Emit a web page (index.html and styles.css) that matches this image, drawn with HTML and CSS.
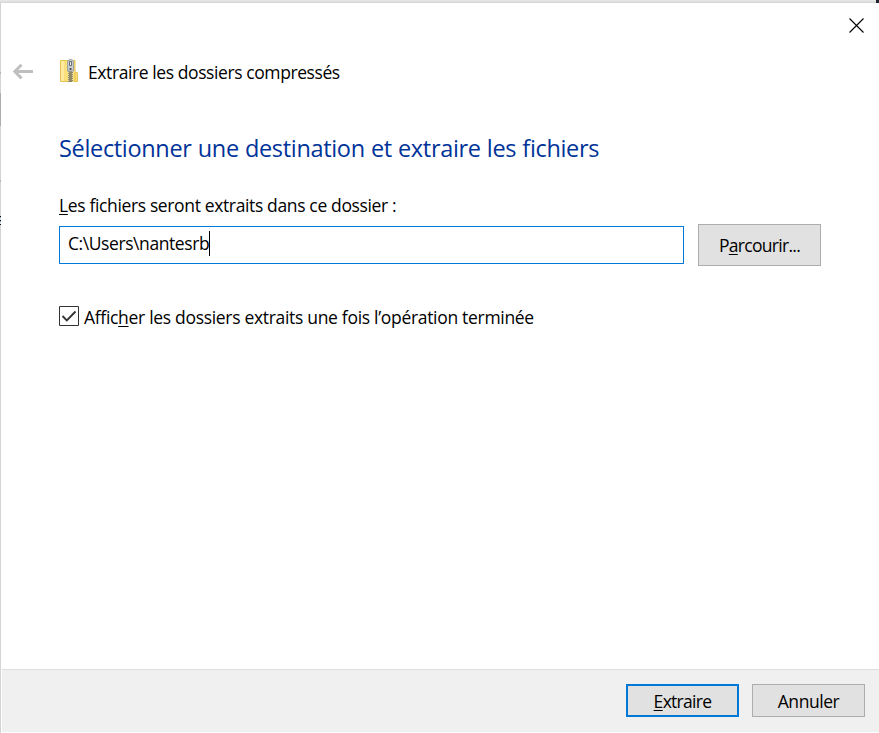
FILE: index.html
```html
<!DOCTYPE html>
<html lang="fr">
<head>
<meta charset="utf-8">
<title>Extraire les dossiers compressés</title>
<link rel="stylesheet" href="styles.css">
</head>
<body>
<div class="desktop">
<span class="edge-mark edge-tick"></span>
<span class="edge-mark edge-thumb"></span>
<span class="edge-mark edge-tick-low"></span>
<span class="edge-mark edge-glyph"></span>
<span class="edge-mark edge-corner"></span>
<main class="dialog">
  <div class="titlebar">
    <svg class="close" width="15" height="15" viewBox="0 0 15 15"><path d="M.5 .5l14 14M14.5 .5l-14 14" stroke="#000" stroke-width="1.1"/></svg>
  </div>
  <header class="header">
    <svg class="back" width="20" height="16" viewBox="0 0 20 16"><path d="M20 7.5H2M8.500 .8L1.800 7.500l6.700 6.900" fill="none" stroke="#bfbfbf" stroke-width="3"/></svg>
    <svg class="folder" width="18" height="24" viewBox="0 0 18 24">
      <path d="M.5 1.500h14.500v12h2q.5 0 .5 .8V22.500H.5z" fill="#fbdf78" stroke="#e5c254"/>
      <path d="M1 2h3v20H1z" fill="#ffeaa0"/>
      <path d="M15 14v8" stroke="#e5bd48"/>
      <path d="M8 11h5v12H8z" fill="#e9dca8"/>
      <path d="M9 12v11M11 12v11" stroke="#55523f" stroke-width="1.200" stroke-dasharray="1 1"/>
      <path d="M10 13v10M12 13v10" stroke="#55523f" stroke-width="1.200" stroke-dasharray="1 1"/>
      <path d="M7.500 12V3q0-2.500 3-2.500T13.500 3v9z" fill="#c6c9cd" stroke="#a0a4a8"/>
      <path d="M9.500 2.500h2v4h-2z" fill="#eee" stroke="#5a6067" stroke-width=".9"/>
      <path d="M9.500 9h2v2h-2z" fill="#50565e"/>
    </svg>
    <span class="title">Extraire les dossiers compressés</span>
  </header>
  <section class="content">
    <h1>Sélectionner une destination et extraire les fichiers</h1>
    <div class="label"><u>L</u>es fichiers seront extraits dans ce dossier :</div>
    <div class="path-row">
      <div class="field"><span class="path">C:\Users\nantesrb</span><span class="caret"></span></div>
      <button class="button browse"><span>P<u>a</u>rcourir...</span></button>
    </div>
    <div class="check-row">
      <svg width="20" height="20" viewBox="0 0 20 20"><path d="M.5 .5h19v19H.5z" fill="#fff" stroke="#333"/><path d="M3.500 10l4.300 4.300L16.500 5.500" fill="none" stroke="#333" stroke-width="1.9"/></svg>
      <span class="check-label">Affic<u>h</u>er les dossiers extraits une fois l’opération terminée</span>
    </div>
  </section>
  <footer class="footer">
    <button class="button primary"><span class="extract"><u>E</u>xtraire</span></button>
    <button class="button"><span class="cancel">Annuler</span></button>
  </footer>
</main>
</div>
</body>
</html>
```
FILE: styles.css
```css
* { box-sizing: border-box; }
body {
  margin: 0;
  font: 17.5px/24px "Open Sans", "Noto Sans", sans-serif;
  color: #000;
}
.desktop {
  position: relative;
  width: 879px;
  height: 733px;
  padding: 3px 0 0 1px;
  overflow: hidden;
  background: linear-gradient(#eaeaea, #d4d4d4 3px);
}
.edge-mark { position: absolute; left: 0; width: 1px; background: #b4b4b4; }
.edge-tick { top: 72px; height: 2px; }
.edge-thumb { top: 93px; height: 33px; background: #adadad; }
.edge-tick-low { top: 180px; height: 2px; }
.edge-glyph { top: 216px; height: 9px; background: repeating-linear-gradient(#111 0 1px, #6ca4d4 1px 2px, #ddd 2px 4px); }
.edge-corner { top: 0; left: 876px; width: 3px; height: 3px; background: #20262e; }
.dialog {
  display: flex;
  flex-direction: column;
  height: 730px;
  padding-bottom: 1px;
  background: #fff;
}
.titlebar { display: flex; justify-content: flex-end; height: 48px; padding: 15px 15px 0 0; }
.header { display: flex; align-items: center; height: 42px; padding-left: 12px; }
.back { margin-right: 27px; }
.folder { margin-right: 10px; margin-bottom: 2px; }
.title { letter-spacing: -.41px; }
svg { flex: none; display: block; }
.content { flex: 1; padding: 38px 58px 0; }
h1 {
  width: max-content;
  margin: 0;
  font-size: 23.5px;
  line-height: 34px;
  font-weight: 400;
  letter-spacing: -.33px;
  word-spacing: .4px;
  color: #003399;
}
.label { width: max-content; margin-top: 28px; white-space: nowrap; letter-spacing: -.36px; }
u { text-decoration-thickness: 1px; text-underline-offset: 2px; text-decoration-skip-ink: none; }
.path-row { display: flex; align-items: center; gap: 14px; margin-top: 7px; }
.field {
  display: flex;
  align-items: center;
  width: 625px;
  height: 38px;
  padding: 0 8px 4px;
  border: 1px solid #0078d7;
}
.path { letter-spacing: -.42px; }
.caret { width: 1px; height: 25px; background: #000; }
.button {
  width: 113px;
  height: 33px;
  padding: 0;
  border: 1px solid #adadad;
  background: #e1e1e1;
  font: inherit;
  color: inherit;
}
.browse { width: 123px; height: 42px; letter-spacing: -.7px; }
.extract { letter-spacing: -.7px; }
.cancel { letter-spacing: -.45px; }
.primary { border: 2px solid #0078d7; }
.check-row { display: flex; align-items: flex-start; gap: 5px; margin-top: 40px; white-space: nowrap; }
.check-label { margin-top: -1px; letter-spacing: -.31px; }
.footer {
  display: flex;
  justify-content: flex-end;
  gap: 13px;
  height: 63px;
  margin-left: 1px;
  padding: 14px 14px 0 0;
  border-top: 1px solid #dfdfdf;
  background: #f0f0f0;
}
```
